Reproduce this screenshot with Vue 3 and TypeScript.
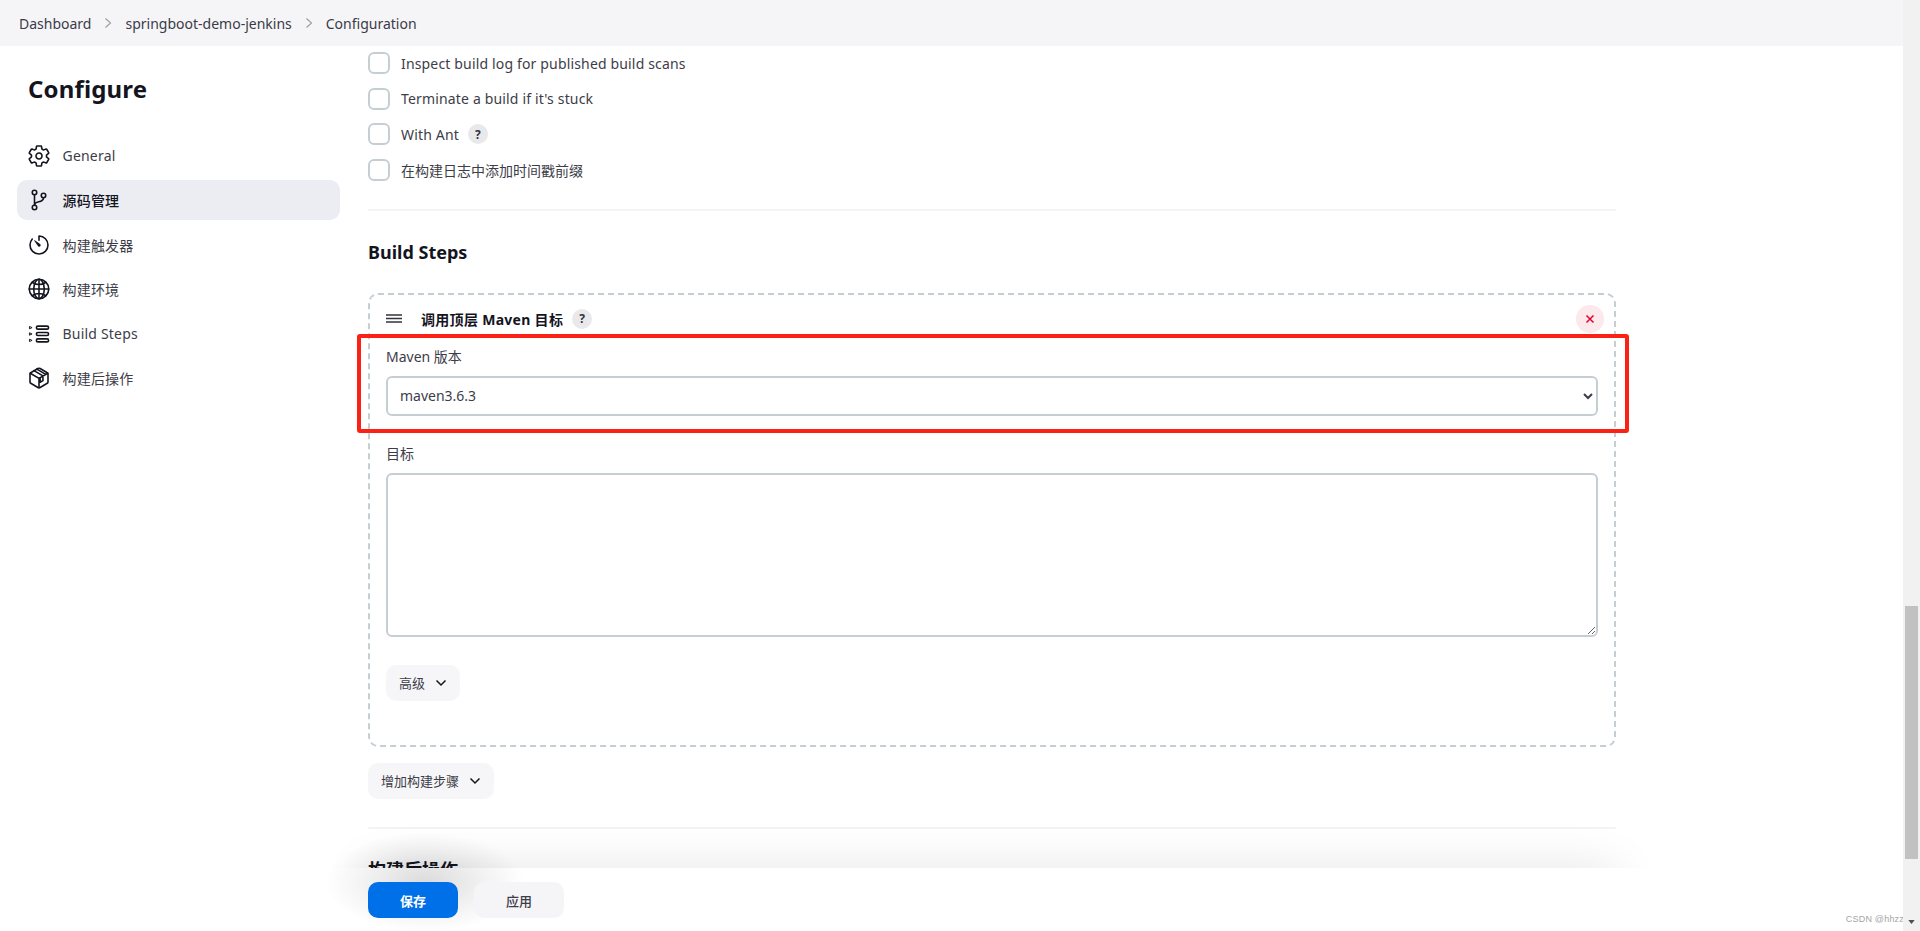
<script setup lang="ts">
const crumbs: string[] = ['Dashboard', 'springboot-demo-jenkins', 'Configuration']
const options: { text: string; help?: boolean; cjk?: boolean }[] = [
  { text: 'Inspect build log for published build scans' },
  { text: "Terminate a build if it's stuck" },
  { text: 'With Ant', help: true },
  { text: '在构建日志中添加时间戳前缀', cjk: true },
]
const nav: { id: string; label: string; active?: boolean }[] = [
  { id: 'gear', label: 'General' },
  { id: 'branch', label: '源码管理', active: true },
  { id: 'timer', label: '构建触发器' },
  { id: 'globe', label: '构建环境' },
  { id: 'steps', label: 'Build Steps' },
  { id: 'box', label: '构建后操作' },
]
</script>

<template>
  <div class="shell">
    <div class="page">
      <header class="crumbs">
        <template v-for="(c, i) in crumbs" :key="c">
          <span>{{ c }}</span>
          <svg v-if="i < crumbs.length - 1" class="sep" viewBox="0 0 8 12"><path d="M1.5 1.5 6.5 6l-5 4.5" /></svg>
        </template>
      </header>
      <div class="body">
        <aside class="side">
          <h1>Configure</h1>
          <nav class="nav">
            <a v-for="n in nav" :key="n.id" class="nav-item" :class="{ active: n.active }">
              <svg class="ico" viewBox="0 0 512 512">
                <path v-if="n.id === 'gear'" d="M262.29 192.31a64 64 0 1057.4 57.4 64.13 64.13 0 00-57.4-57.4zM416.39 256a154.34 154.34 0 01-1.53 20.79l45.21 35.46a10.81 10.81 0 012.45 13.75l-42.77 74a10.81 10.81 0 01-13.14 4.59l-44.9-18.08a16.11 16.11 0 00-15.17 1.75A164.48 164.48 0 01325 400.8a15.94 15.94 0 00-8.82 12.14l-6.73 47.89a11.08 11.08 0 01-10.68 9.17h-85.54a11.11 11.11 0 01-10.69-8.87l-6.72-47.82a16.07 16.07 0 00-9-12.22 155.3 155.3 0 01-21.46-12.57 16 16 0 00-15.11-1.71l-44.89 18.07a10.81 10.81 0 01-13.14-4.58l-42.77-74a10.8 10.8 0 012.45-13.75l38.21-30a16.05 16.05 0 006-14.08c-.36-4.17-.58-8.33-.58-12.5s.21-8.27.58-12.35a16 16 0 00-6.07-13.94l-38.19-30A10.81 10.81 0 0149.48 186l42.77-74a10.81 10.81 0 0113.14-4.59l44.9 18.08a16.11 16.11 0 0015.17-1.75A164.48 164.48 0 01187 111.2a15.94 15.94 0 008.82-12.14l6.73-47.89A11.08 11.08 0 01213.23 42h85.54a11.11 11.11 0 0110.69 8.87l6.72 47.82a16.07 16.07 0 009 12.22 155.3 155.3 0 0121.46 12.57 16 16 0 0015.11 1.71l44.89-18.07a10.81 10.81 0 0113.14 4.58l42.77 74a10.8 10.8 0 01-2.45 13.75l-38.21 30a16.05 16.05 0 00-6.05 14.08c.33 4.14.55 8.3.55 12.47z" />
                <g v-else-if="n.id === 'branch'">
                  <circle cx="160" cy="96" r="48" /><circle cx="160" cy="416" r="48" /><path d="M160 368V144" /><circle cx="352" cy="160" r="48" /><path d="M352 208c0 128-192 48-192 160" />
                </g>
                <g v-else-if="n.id === 'timer'">
                  <path d="M112.91 128A191.85 191.85 0 0064 254c-1.18 106.35 85.65 193.8 192 194 106.2.2 192-85.83 192-192 0-104.54-83.55-189.61-187.5-192a4.36 4.36 0 00-4.5 4.37V152" />
                  <path class="solid" d="M233.38 278.63l-79-113a8.13 8.13 0 0111.32-11.32l113 79a32.5 32.5 0 01-37.25 53.26 33.21 33.21 0 01-8.07-7.94z" />
                </g>
                <g v-else-if="n.id === 'globe'">
                  <path d="M256 48C141.13 48 48 141.13 48 256s93.13 208 208 208 208-93.13 208-208S370.87 48 256 48z" />
                  <path d="M256 48c-58.07 0-112.67 93.13-112.67 208S197.93 464 256 464s112.67-93.13 112.67-208S314.07 48 256 48z" />
                  <path d="M117.33 117.33c38.24 27.15 86.38 43.34 138.67 43.34s100.43-16.19 138.67-43.34M394.67 394.67c-38.24-27.15-86.38-43.34-138.67-43.34s-100.43 16.19-138.67 43.34M256 48v416M464 256H48" />
                </g>
                <g v-else-if="n.id === 'steps'">
                  <rect x="200" y="88" width="260" height="64" rx="32" /><rect x="200" y="224" width="260" height="64" rx="32" /><rect x="200" y="360" width="260" height="64" rx="32" />
                  <path class="thin" d="M60 98l48 22-48 22zM60 234l48 22-48 22zM60 370l48 22-48 22z" />
                </g>
                <g v-else>
                  <path d="M448 341.37V170.61A32 32 0 00432.11 143l-152-88.46a47.94 47.94 0 00-48.24 0L79.89 143A32 32 0 0064 170.61v170.76A32 32 0 0079.89 369l152 88.46a48 48 0 0048.24 0l152-88.46A32 32 0 00448 341.37z" />
                  <path d="M69 154l187 110 187-110M256 464V264M150 100l190 112v100l-60 35V262M210 66l190 112" />
                </g>
              </svg>
              <span>{{ n.label }}</span>
            </a>
          </nav>
        </aside>
        <main class="main">
          <div class="checks">
            <label v-for="o in options" :key="o.text" class="check" :class="{ cjk: o.cjk }">
              <span class="box"></span>
              <span>{{ o.text }}</span>
              <span v-if="o.help" class="help">?</span>
            </label>
          </div>
          <hr class="rule first" />
          <h2 class="section">Build Steps</h2>
          <section class="card">
            <div class="card-head">
              <svg class="grip" viewBox="0 0 16 9"><path d="M0 1h16M0 4.5h16M0 8h16" /></svg>
              <strong>调用顶层 Maven 目标</strong>
              <span class="help">?</span>
              <button class="close" type="button" aria-label="删除">
                <svg viewBox="0 0 10 10"><path d="M1.5 1.5l7 7M8.5 1.5l-7 7" /></svg>
              </button>
            </div>
            <div class="field">
              <div class="field-label">Maven 版本</div>
              <select class="select"><option>maven3.6.3</option></select>
            </div>
            <div class="field goal">
              <div class="field-label">目标</div>
              <textarea class="area"></textarea>
            </div>
            <button class="ghost adv" type="button">
              高级
              <svg class="chev" viewBox="0 0 12 8"><path d="M1.5 1.5 6 6l4.5-4.5" /></svg>
            </button>
          </section>
          <button class="ghost add" type="button">
            增加构建步骤
            <svg class="chev" viewBox="0 0 12 8"><path d="M1.5 1.5 6 6l4.5-4.5" /></svg>
          </button>
          <hr class="rule second" />
          <h2 class="section post">构建后操作</h2>
        </main>
      </div>
      <div class="redmark"></div>
      <div class="bar-shadow"></div>
      <footer class="bar">
        <div class="blob"></div>
        <button class="btn primary" type="button">保存</button>
        <button class="btn" type="button">应用</button>
      </footer>
      <div class="mark">CSDN @hhzz</div>
    </div>
    <div class="scroll">
      <div class="thumb"></div>
      <svg class="down" viewBox="0 0 8 5"><path d="M0 0h8L4 5z" /></svg>
    </div>
  </div>
</template>

<style>
html, body { margin: 0; background: #fff; overflow: hidden; }
</style>

<style scoped>
.shell {
  display: flex;
  height: 931px;
  overflow: hidden;
  font-family: "Noto Sans", "Noto Sans CJK SC", sans-serif;
  font-size: 14px;
  color: #14141f;
}
.page { position: relative; flex: 1; min-width: 0; overflow: hidden; }
.crumbs {
  display: flex;
  align-items: center;
  height: 46px;
  padding-left: 19px;
  background: #f5f5f8;
  color: #3b3b46;
  font-size: 14px;
}
.sep { width: 8px; height: 12px; margin: 0 13px; fill: none; stroke: #9a9aa2; stroke-width: 1.1; }
.body { display: flex; }
.side { width: 340px; padding: 0 0 0 17px; box-sizing: border-box; flex: none; }
h1 { margin: 0; padding: 27px 0 0 11px; font-size: 24px; line-height: 32px; font-weight: 700; letter-spacing: 0.15px; }
.nav { display: flex; flex-direction: column; margin-top: 30.5px; }
.nav-item {
  display: flex;
  align-items: center;
  height: 40px;
  margin-bottom: 4.5px;
  padding-left: 10px;
  border-radius: 10px;
  color: #3d3d48;
  letter-spacing: 0.2px;
}
.nav-item.active { background: #ecedf3; color: #14141f; font-weight: 500; }
.ico { width: 24px; height: 24px; margin-right: 11.5px; fill: none; stroke: #14141f; stroke-width: 34; stroke-linecap: round; stroke-linejoin: round; }
.ico .solid { fill: #14141f; stroke: none; }
.ico .thin { stroke-width: 20; }
.main { width: 1248px; margin-left: 28px; flex: none; padding-top: 6px; }
.checks { display: flex; flex-direction: column; }
.check { display: flex; align-items: center; height: 22px; margin-bottom: 13.67px; color: #3d3d48; letter-spacing: 0.16px; }
.check.cjk { letter-spacing: 0; }
.box {
  width: 22px;
  height: 22px;
  margin-right: 11px;
  box-sizing: border-box;
  border: 2px solid #c5cfd3;
  border-radius: 6px;
}
.help {
  display: inline-flex;
  align-items: center;
  justify-content: center;
  width: 20px;
  height: 20px;
  margin-left: 9px;
  border-radius: 50%;
  background: #e9e9ec;
  color: #33333d;
  font-size: 12px;
  font-weight: 700;
}
.rule { height: 2px; margin: 0; border: 0; background: #f4f4f8; }
.rule.first { margin-top: 14.32px; }
.section { margin: 0; font-size: 18px; font-weight: 700; line-height: 24px; }
.rule.first + .section { margin-top: 29px; }
.card {
  margin-top: 29px;
  height: 454px;
  box-sizing: border-box;
  border: 2px dashed #c5cfd3;
  border-radius: 10px;
  padding: 0 16px;
}
.card-head { position: relative; display: flex; align-items: center; height: 40px; margin: 4px 0 8px; }
.card-head strong { font-size: 14px; font-weight: 700; letter-spacing: 0.3px; }
.grip { width: 16px; height: 9px; margin-right: 19px; fill: none; stroke: #33333d; stroke-width: 1.4; }
.close {
  position: absolute;
  right: -6px;
  top: 6px;
  display: flex;
  align-items: center;
  justify-content: center;
  width: 28px;
  height: 28px;
  padding: 0;
  border: 0;
  border-radius: 50%;
  background: #fbe9ec;
}
.close svg { width: 10px; height: 10px; fill: none; stroke: #e6002d; stroke-width: 1.5; }
.field-label { color: #3d3d48; font-size: 14px; line-height: 20px; }
.goal { margin-top: 28px; }
.select {
  display: block;
  width: 100%;
  height: 40px;
  margin-top: 9px;
  padding: 0 8px;
  box-sizing: border-box;
  border: 2px solid #c5cfd3;
  border-radius: 6px;
  background: #fff;
  color: #3d3d48;
  font: inherit;
}
.area {
  display: block;
  width: 100%;
  height: 164px;
  margin-top: 9px;
  box-sizing: border-box;
  border: 2px solid #c5cfd3;
  border-radius: 6px;
  background: #fff;
}
.ghost {
  display: inline-flex;
  align-items: center;
  height: 36px;
  padding: 0 13px;
  border: 0;
  border-radius: 10px;
  background: #f6f6f9;
  color: #3d3d48;
  font: inherit;
  font-size: 13px;
}
.adv { margin-top: 28px; }
.add { margin-top: 16px; }
.chev { width: 12px; height: 8px; margin-left: 10px; fill: none; stroke: #14141f; stroke-width: 1.5; }
.rule.second { margin-top: 28px; }
.section.post { margin-top: 29px; }
.redmark {
  position: absolute;
  left: 357px;
  top: 334px;
  width: 1272px;
  height: 99px;
  box-sizing: border-box;
  border: 4px solid #fb2114;
  border-radius: 3px;
  pointer-events: none;
}
.bar-shadow {
  position: absolute;
  left: 368px;
  top: 868px;
  width: 1248px;
  height: 60px;
  box-shadow: 0 0 50px rgba(0, 0, 0, 0.1);
  pointer-events: none;
}
.bar {
  position: absolute;
  left: 0;
  right: 0;
  top: 868px;
  bottom: 0;
  display: flex;
  gap: 16px;
  align-items: flex-start;
  padding: 14px 0 0 368px;
  background: #fff;
}
.blob {
  position: absolute;
  left: 325px;
  top: -36px;
  width: 200px;
  height: 100px;
  background: radial-gradient(ellipse closest-side, rgba(0, 0, 0, 0.14), rgba(0, 0, 0, 0.05) 60%, rgba(0, 0, 0, 0));
  pointer-events: none;
}
.btn {
  position: relative;
  width: 90px;
  height: 36px;
  padding: 0;
  border: 0;
  border-radius: 10px;
  background: #f5f5f8;
  color: #3d3d48;
  font: inherit;
  font-size: 13px;
  font-weight: 500;
}
.btn.primary { background: #0070e8; color: #fff; font-weight: 700; }
.mark {
  position: absolute;
  right: -1px;
  bottom: 7px;
  font-family: "Liberation Sans", sans-serif;
  font-size: 9px;
  letter-spacing: 0.2px;
  color: #a5a5a5;
  z-index: 2;
}
.scroll { position: relative; width: 17px; flex: none; background: #f1f1f1; }
.thumb { position: absolute; left: 2px; right: 2px; top: 606px; height: 253px; background: #c1c1c1; }
.down { position: absolute; left: 5px; top: 920px; width: 7px; height: 4px; fill: #505050; }
</style>
